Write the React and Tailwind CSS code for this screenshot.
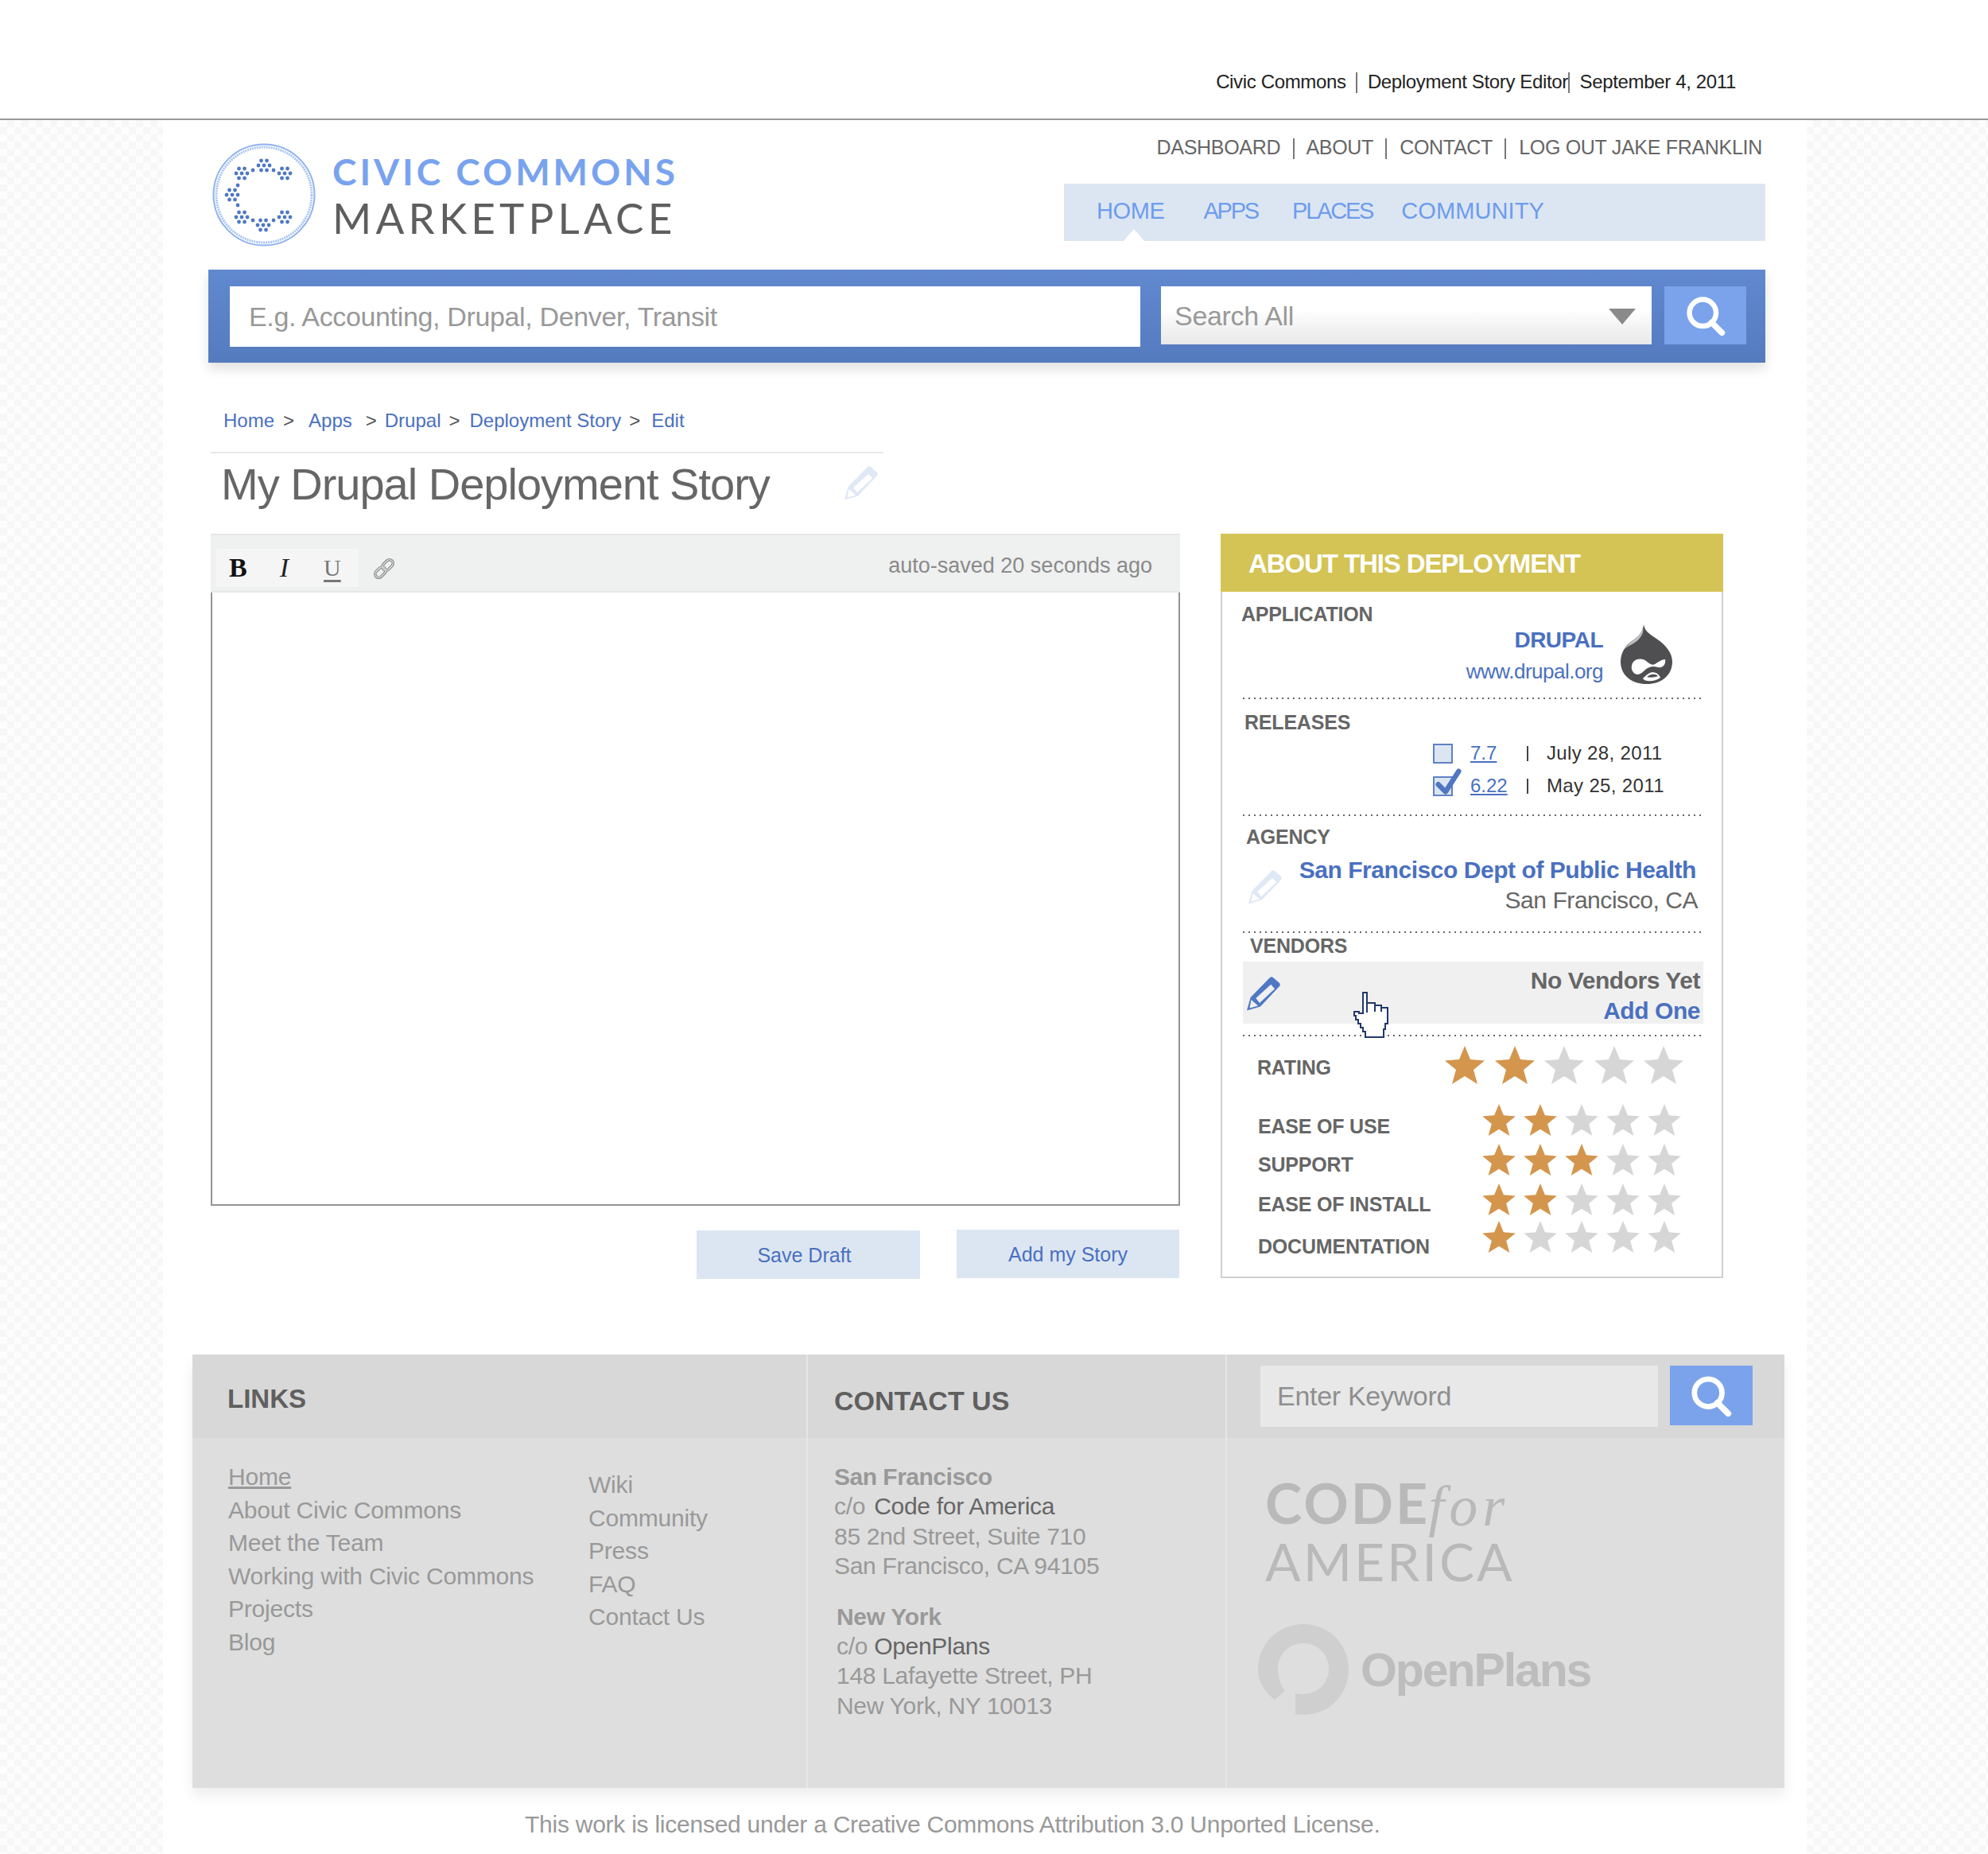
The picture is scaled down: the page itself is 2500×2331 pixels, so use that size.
import React from 'react';

const Sep = () => <span className="inline-block w-[2px] h-[26px] bg-[#777] align-[-6px]" />;
const NavSep = () => <span className="inline-block mx-[2.5px] w-[2px] h-[26px] bg-[#777] align-[-6px]" />;

function Star({ on, big }) {
  return (
    <svg viewBox="0 0 50 48" className={big ? 'w-[50px] h-[48px] shrink-0' : 'w-[42px] h-[40px] shrink-0'}>
      <polygon points="25,0 32,17 50,18.5 36,30 41,48 25,38 9,48 14,30 0,18.5 18,17" fill={on ? '#d4954d' : '#d6d6d6'} />
    </svg>
  );
}

function Stars({ n, big }) {
  return (
    <div className={big ? 'flex gap-[12.5px]' : 'flex gap-[10px]'}>
      {[0, 1, 2, 3, 4].map((i) => <Star key={i} on={i < n} big={big} />)}
    </div>
  );
}

function Pencil({ color, className }) {
  return (
    <svg viewBox="0 0 42 43" className={className}>
      <path
        fillRule="evenodd"
        fill={color}
        d="M29 1 Q31 -0.5 33 1 L41 8 Q42.5 10 41 12 L17 37.6 L0 42.5 L4.6 26 Z M30.3 9.7 L35 15.3 L16 33 L11.3 27 Z M5.5 29 L14 36.5 L3.5 39.5 Z"
      />
    </svg>
  );
}

function SearchGlyph({ className }) {
  return (
    <svg viewBox="0 0 56 56" className={className} fill="none" stroke="#fff">
      <circle cx="24" cy="24" r="18" strokeWidth="7" />
      <path d="M36 37 L50 51" strokeWidth="8" strokeLinecap="round" />
    </svg>
  );
}

function Logo() {
  const clusters = [[65, 28], [37, 38], [91, 38], [25, 65], [37, 93], [91, 93], [64, 103]];
  const singles = [[51, 34], [77, 34], [32, 53], [32, 78], [51, 97], [77, 97]];
  const hex = [[0, 0], [7, 0], [-7, 0], [3.5, 6], [-3.5, 6], [3.5, -6], [-3.5, -6]];
  return (
    <svg viewBox="0 0 130 132" className="w-[130px] h-[132px] shrink-0">
      <circle cx="65" cy="66" r="63.5" fill="none" stroke="#8fb2ec" strokeWidth="2" />
      <circle cx="65" cy="66" r="60" fill="none" stroke="#a9c5f2" strokeWidth="3" strokeDasharray="2 1" />
      {clusters.map(([x, y], i) => hex.map(([a, b], j) => (
        <circle key={i + '-' + j} cx={x + a} cy={y + b + 1} r="2.4" fill="#4f78c4" />
      )))}
      {singles.map(([x, y], i) => <circle key={i} cx={x} cy={y + 1} r="2.4" fill="#4f78c4" />)}
    </svg>
  );
}

function DrupalLogo() {
  return (
    <svg viewBox="0 0 66 76" className="w-[66px] h-[76px] shrink-0 -mt-[2px]">
      <path d="M29 0 C30 8 36 12 45 18 C57 26 65 36 65 47 C65 65 50 75 33 75 C15 75 0 65 0 47 C0 33 9 24 17 19 C24 14 28 8 29 0 Z" fill="#4f4f52" />
      <path d="M28 4 C27 12 20 16 14 21 C10 25 7 28 5 31 C10 26 20 24 25 16 C28 12 29 8 28 4 Z" fill="#bdbdbd" />
      <path d="M14 52 C15 44 25 41 32 46 C36 49 39 52 43 50 C48 47 52 44 56 44 C57 50 54 55 47 54 C41 52 36 53 31 57 C27 61 22 65 18 62 C15 60 13 56 14 52 Z" fill="#fff" />
      <path d="M28 68 C30 72 42 73 50 67 C48 61 40 58 35 62 C32 64 30 66 28 68 Z" fill="#fff" />
      <path d="M33 66 C38 62 44 62 47 65 C42 67 37 67 33 66 Z" fill="#4f4f52" />
    </svg>
  );
}

function Cursor() {
  return (
    <svg viewBox="0 0 45 58" className="w-[45px] h-[58px] absolute left-[139px] top-[38px]" shapeRendering="crispEdges">
      <path d="M12 1 H17 V14 H27 V17 H35 V20 H43 V40 H40 V47 H38 V57 H15 V50 H12 V45 H9 V40 H6 V35 H3 V30 H1 V25 H7 V27 H12 Z" fill="#fff" stroke="#21386b" strokeWidth="2.4" />
      <path d="M17 14 V26 M27 15 V25 M35 18 V25" stroke="#21386b" strokeWidth="2.4" fill="none" />
    </svg>
  );
}

function Dots() {
  return <div className="mx-[26px] h-[2px] w-[576px] bg-[linear-gradient(to_right,#666_2px,transparent_2px)] bg-[length:7px_2px]" />;
}

const Label = ({ className, children }) => (
  <div className={'text-[25px] leading-[30px] font-bold text-[#666] tracking-[-0.2px] ' + className}>{children}</div>
);

function Release({ on, ver, date, className }) {
  return (
    <div className={'flex items-center ml-[265px] h-[30px] text-[24px] ' + className}>
      <div className="relative w-[25px] h-[25px] border-2 border-[#5f82c6] bg-[#dce6f2] shrink-0">
        {on && (
          <svg viewBox="0 0 36 38" className="absolute left-[1px] top-[-12px] w-[33px] h-[35px]">
            <path d="M4 22 L14 32 L32 4" fill="none" stroke="#4f76c2" strokeWidth="7" strokeLinecap="round" strokeLinejoin="round" />
          </svg>
        )}
      </div>
      <a className="ml-[22px] w-[71px] text-[#4a70c0] underline">{ver}</a>
      <span className="w-[25px]"><span className="block w-[2px] h-[19px] bg-[#444]" /></span>
      <span className="text-[#333] tracking-[0.35px]">{date}</span>
    </div>
  );
}

function RatingRow({ label, n, className, labelClass }) {
  return (
    <div className={'flex ml-[45px] h-[40px] ' + className}>
      <Label className={'w-[282px] shrink-0 ' + labelClass}>{label}</Label>
      <Stars n={n} />
    </div>
  );
}

const FootHead = ({ children, className }) => (
  <div className={'h-[105px] bg-[#d8d8d8] text-[33px] font-bold text-[#5f5f5f] flex items-center ' + className}>{children}</div>
);

export default function App() {
  const sideBg = 'w-[205px] shrink-0 bg-[repeating-conic-gradient(#f7f7f7_0_25%,#fdfdfd_0_50%)] bg-[length:18px_18px]';
  return (
    <div className="w-[2500px] h-[2331px] overflow-hidden bg-white font-['Liberation_Sans',Arial,sans-serif]">
      <div className="h-[151px] border-b-2 border-[#999] flex justify-end items-start pt-[87px] pr-[317px] text-[24px] leading-[32px] text-[#222] tracking-[-0.35px] whitespace-pre">
        <span>Civic Commons  <Sep />  Deployment Story Editor<Sep />  September 4, 2011</span>
      </div>
      <div className="flex h-[2180px]">
        <div className={sideBg} />
        <div className="w-[2067px] shrink-0 bg-white">
          {/* header */}
          <div className="flex h-[188px] ml-[62px]">
            <div className="flex mt-[28px]">
              <Logo />
              <div className="ml-[21px] w-[440px]">
                <div className="font-['Lato'] font-bold text-[#78a3ee] text-[46px] leading-[48px] mt-[13px] tracking-[4px] whitespace-nowrap">CIVIC COMMONS</div>
                <div className="font-['Lato'] text-[#5e5e5e] text-[53px] leading-[56px] mt-[6px] tracking-[5.2px] whitespace-nowrap">MARKETPLACE</div>
              </div>
            </div>
            <div className="ml-auto mr-[52px] w-[882px] flex flex-col">
              <div className="mt-[20px] h-[30px] pr-[4px] flex justify-end items-center text-[25px] text-[#666] tracking-[-0.3px] whitespace-pre">
                <span>DASHBOARD  <NavSep />  ABOUT  <NavSep />  CONTACT  <NavSep />  LOG OUT JAKE FRANKLIN</span>
              </div>
              <div className="relative mt-[30px] h-[72px] bg-[#dce6f2] text-[#6e9cef] text-[29px] leading-[36px] flex pt-[16px] pl-[41px]">
                <span className="tracking-[-0.4px]">HOME</span>
                <span className="ml-[49px] tracking-[-2.2px]">APPS</span>
                <span className="ml-[43px] tracking-[-2.2px]">PLACES</span>
                <span className="ml-[36px] tracking-[0.1px]">COMMUNITY</span>
                <span className="absolute left-[75px] bottom-0 w-0 h-0 border-x-[13px] border-x-transparent border-b-[15px] border-b-white" />
              </div>
            </div>
          </div>

          {/* search bar */}
          <div className="ml-[57px] w-[1958px] h-[117px] bg-[linear-gradient(#6189cf,#557bbf)] shadow-[0_8px_14px_rgba(0,0,0,0.12)] flex pt-[21px] pl-[27px]">
            <div className="w-[1145px] h-[76px] bg-white pl-[24px] text-[#999] text-[34px] leading-[76px] tracking-[-0.35px]">E.g. Accounting, Drupal, Denver, Transit</div>
            <div className="ml-[26px] w-[617px] h-[73px] bg-[linear-gradient(#fff_40%,#e8e8e8)] flex items-center pl-[17px] pr-[20px] pt-[2px] text-[34px] text-[#999] justify-between tracking-[-0.3px]">
              <span>Search All</span>
              <span className="w-0 h-0 border-x-[17px] border-x-transparent border-t-[20px] border-t-[#8a8a8a]" />
            </div>
            <div className="ml-[16px] w-[103px] h-[73px] bg-[#7ba3ec] flex items-center justify-center">
              <SearchGlyph className="w-[52px] h-[52px]" />
            </div>
          </div>

          {/* breadcrumb */}
          <div className="ml-[76px] mt-[58px] h-[30px] flex text-[24px] leading-[30px] text-[#4a70c0] whitespace-nowrap">
            <span>Home</span><span className="ml-[11px] text-[#555]">&gt;</span>
            <span className="ml-[18px]">Apps</span><span className="ml-[17px] text-[#555]">&gt;</span>
            <span className="ml-[10px]">Drupal</span><span className="ml-[10px] text-[#555]">&gt;</span>
            <span className="ml-[12px]">Deployment Story</span><span className="ml-[10px] text-[#555]">&gt;</span>
            <span className="ml-[14px]">Edit</span>
          </div>

          <div className="ml-[60px] mt-[24px] w-[846px] border-t-2 border-[#e8e8e8] flex justify-between items-start pl-[13px] pr-[7px]">
            <h1 className="text-[56px] leading-[68px] mt-[5px] text-[#666] tracking-[-1px]">My Drupal Deployment Story</h1>
            <Pencil color="#dfe8f5" className="w-[42px] h-[43px] mt-[16px]" />
          </div>

          {/* main row */}
          <div className="flex ml-[60px] mt-[28px]">
            <div className="w-[1219px]">
              <div className="h-[845px] flex flex-col">
                <div className="h-[74px] bg-[#eff0f0] border-t-2 border-b-2 border-[#e6e7e7] flex items-start pl-[7px] pr-[35px]">
                  <div className="mt-[17px] w-[179px] h-[48px] bg-[#f5f5f5] flex items-center font-['Liberation_Serif'] leading-[48px]">
                    <span className="ml-[16px] text-[34px] font-bold text-[#111]">B</span>
                    <span className="ml-[41px] text-[34px] italic text-[#222]">I</span>
                    <span className="ml-[44px] text-[30px] underline underline-offset-[5px] text-[#777]">U</span>
                  </div>
                  <svg viewBox="0 0 30 30" className="w-[30px] h-[30px] mt-[27px] ml-[17px]" fill="none">
                    <g transform="rotate(-45 15 15)">
                      <rect x="1" y="10.5" width="15" height="9" rx="4.5" stroke="#8a8a8a" strokeWidth="3.6" />
                      <rect x="14" y="10.5" width="15" height="9" rx="4.5" stroke="#8a8a8a" strokeWidth="3.6" />
                      <rect x="1" y="10.5" width="15" height="9" rx="4.5" stroke="#e8e8e8" strokeWidth="1.2" />
                      <rect x="14" y="10.5" width="15" height="9" rx="4.5" stroke="#e8e8e8" strokeWidth="1.2" />
                    </g>
                  </svg>
                  <span className="ml-auto mt-[21px] text-[27px] leading-[34px] text-[#8a8a8a]">auto-saved 20 seconds ago</span>
                </div>
                <div className="flex-1 bg-white border-2 border-t-0 border-[#949494]" />
              </div>
              <div className="mt-[30px] flex justify-end gap-[46px] pr-[1px] text-[25px] text-[#4a70c0]">
                <div className="w-[281px] h-[61px] mt-[1px] pr-[10px] pt-[2px] bg-[#dce6f2] flex items-center justify-center">Save Draft</div>
                <div className="w-[280px] h-[61px] pt-[2px] bg-[#dce6f2] flex items-center justify-center">Add my Story</div>
              </div>
            </div>

            {/* sidebar */}
            <div className="ml-[51px] w-[632px]">
              <div className="h-[73px] bg-[#d4c355] pl-[35px] text-[33px] leading-[76px] font-bold text-white tracking-[-1.1px]">ABOUT THIS DEPLOYMENT</div>
              <div className="relative border-2 border-t-0 border-[#d0d0d0] pb-[30px]">
                <Label className="ml-[24px] pt-[13px] box-content">APPLICATION</Label>
                <div className="flex justify-end pr-[61px]">
                  <div className="text-right mr-[22px] text-[#4a70c0]">
                    <div className="text-[28px] leading-[36px] font-bold tracking-[-0.5px]">DRUPAL</div>
                    <div className="text-[26px] leading-[42px] tracking-[-0.5px]">www.drupal.org</div>
                  </div>
                  <DrupalLogo />
                </div>
                <div className="h-[12px]" />
                <Dots />
                <Label className="ml-[28px] mt-[14px]">RELEASES</Label>
                <Release ver="7.7" date="July 28, 2011" className="mt-[9px]" />
                <Release on ver="6.22" date="May 25, 2011" className="mt-[11px]" />
                <div className="h-[21px]" />
                <Dots />
                <Label className="ml-[30px] mt-[11px]">AGENCY</Label>
                <div className="flex justify-between mt-[9px] pl-[33px] pr-[30px]">
                  <Pencil color="#dfe8f5" className="w-[42px] h-[43px] mt-[18px]" />
                  <div className="text-right text-[30px] leading-[36px]">
                    <div className="font-bold text-[#4a70c0] tracking-[-0.45px] mr-[2px]">San Francisco Dept of Public Health</div>
                    <div className="mt-[2px] text-[#666] tracking-[-0.45px]">San Francisco, CA</div>
                  </div>
                </div>
                <div className="h-[21px]" />
                <Dots />
                <Label className="ml-[35px] mt-[1px]">VENDORS</Label>
                <div className="relative mx-[26px] mt-[5px] h-[78px] w-[579px] bg-[#f0f0f0] flex justify-between pl-[5px] pr-[4px]">
                  <Pencil color="#4f78c4" className="w-[42px] h-[43px] mt-[19px]" />
                  <div className="text-right text-[30px] leading-[36px] pt-[6px] font-bold tracking-[-0.45px]">
                    <div className="text-[#666]">No Vendors Yet</div>
                    <div className="mt-[2px] text-[#4a70c0]">Add One</div>
                  </div>
                  <Cursor />
                </div>
                <div className="h-[14px]" />
                <Dots />
                <div className="flex ml-[44px] mt-[12px] h-[48px]">
                  <Label className="w-[236px] mt-[12px] shrink-0">RATING</Label>
                  <Stars n={2} big />
                </div>
                <RatingRow label="EASE OF USE" n={2} className="mt-[25px]" labelClass="mt-[13px]" />
                <RatingRow label="SUPPORT" n={3} className="mt-[10px]" labelClass="mt-[11px]" />
                <RatingRow label="EASE OF INSTALL" n={2} className="mt-[10px]" labelClass="mt-[11px]" />
                <RatingRow label="DOCUMENTATION" n={1} className="mt-[7px]" labelClass="mt-[17px]" />
              </div>
            </div>
          </div>

          {/* footer */}
          <div className="ml-[37px] mt-[95px] w-[2002px] h-[545px] flex bg-[#dedede] shadow-[0_10px_16px_rgba(0,0,0,0.07)]">
            <div className="w-[774px] border-r-2 border-[#e6e6e6]">
              <FootHead className="pl-[44px] pt-[7px]">LINKS</FootHead>
              <div className="flex text-[30px] leading-[41.6px] text-[#999] tracking-[-0.2px] whitespace-nowrap">
                <div className="ml-[45px] mt-[28px] w-[453px]">
                  <div><span className="underline">Home</span></div>
                  <div>About Civic Commons</div>
                  <div>Meet the Team</div>
                  <div>Working with Civic Commons</div>
                  <div>Projects</div>
                  <div>Blog</div>
                </div>
                <div className="mt-[38px]">
                  <div>Wiki</div>
                  <div>Community</div>
                  <div>Press</div>
                  <div>FAQ</div>
                  <div>Contact Us</div>
                </div>
              </div>
            </div>
            <div className="w-[527px] border-r-2 border-[#e6e6e6]">
              <FootHead className="pl-[33px] pt-[12px] text-[34px]">CONTACT US</FootHead>
              <div className="pl-[33px] pt-[30px] text-[30px] leading-[37.4px] text-[#999] tracking-[-0.3px] whitespace-nowrap">
                <div className="font-bold tracking-[-0.5px]">San Francisco</div>
                <div>c/o <span className="text-[#666] ml-[3px]">Code for America</span></div>
                <div>85 2nd Street, Suite 710</div>
                <div>San Francisco, CA 94105</div>
                <div className="ml-[3px] mt-[26px] font-bold">New York</div>
                <div className="ml-[3px]">c/o <span className="text-[#666]">OpenPlans</span></div>
                <div className="ml-[3px]">148 Lafayette Street, PH</div>
                <div className="ml-[3px]">New York, NY 10013</div>
              </div>
            </div>
            <div className="w-[701px]">
              <div className="h-[105px] bg-[#d8d8d8] flex items-start pt-[14px] pl-[42px]">
                <div className="w-[500px] h-[77px] bg-[#e8e8e8] pl-[21px] text-[34px] leading-[76px] text-[#8f8f8f] tracking-[-0.3px]">Enter Keyword</div>
                <div className="ml-[15px] w-[104px] h-[75px] bg-[#7ba3ec] flex items-center justify-center">
                  <SearchGlyph className="w-[54px] h-[54px]" />
                </div>
              </div>
              <div className="pl-[48px] pt-[43px] text-[#b9b9b9] font-['Lato'] whitespace-nowrap">
                <div className="flex items-start h-[77px]">
                  <span className="text-[70px] leading-[76px] font-bold tracking-[3px]">CODE</span>
                  <span className="ml-[-2px] mt-[5px] font-['Liberation_Serif'] italic text-[72px] leading-[76px] tracking-[6px]">for</span>
                </div>
                <div className="text-[66px] leading-[70px] tracking-[3px]">AMERICA</div>
              </div>
              <div className="flex items-start pl-[39px] mt-[44px]">
                <svg viewBox="0 0 114 114" className="w-[114px] h-[114px] shrink-0">
                  <path d="M47 113 V87 C72 92 89 76 89 56 C89 38 75 24 57 24 C39 24 25 38 25 56 C25 68 29 78 34 84 L21 95 C8 85 0 72 0 57 C0 25 25 0 57 0 C89 0 114 25 114 57 C114 89 89 114 57 114 C53 114 50 114 47 113 Z" fill="#cfcfcf" />
                </svg>
                <span className="ml-[15px] mt-[24px] text-[59px] leading-[68px] font-bold text-[#bdbdbd] font-['Liberation_Sans'] tracking-[-2.1px]">OpenPlans</span>
              </div>
            </div>
          </div>

          <div className="mt-[28px] ml-[455px] text-[30px] leading-[36px] text-[#999] tracking-[-0.25px] whitespace-nowrap">This work is licensed under a Creative Commons Attribution 3.0 Unported License.</div>
        </div>
        <div className={sideBg + ' grow'} />
      </div>
    </div>
  );
}
